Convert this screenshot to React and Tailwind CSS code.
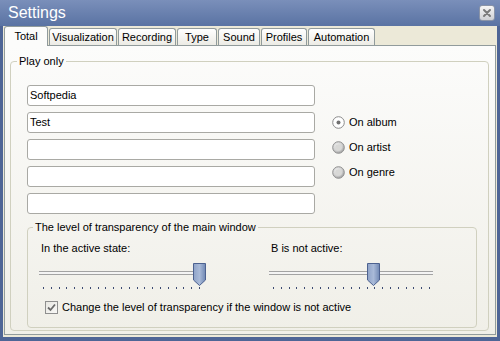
import React from "react";

function CloseButton() {
  return (
    <div className="w-[16px] h-[16px] rounded-[3px] border border-[#8a94a8] bg-gradient-to-b from-[#f6f6f6] to-[#cfd0d4] flex items-center justify-center">
      <svg width="10" height="10" viewBox="0 0 10 10">
        <path d="M2 2 L8 8 M8 2 L2 8" stroke="#7a7a7a" strokeWidth="2" strokeLinecap="round" />
      </svg>
    </div>
  );
}

function Radio({ checked, label }) {
  return (
    <div className="h-[16px] flex items-center gap-[4px]">
      <svg width="13" height="13" viewBox="0 0 13 13">
        <defs>
          <radialGradient id="rg" cx="0.4" cy="0.35" r="0.7">
            <stop offset="0" stopColor="#f2f2f2" />
            <stop offset="0.6" stopColor="#cfcfcf" />
            <stop offset="1" stopColor="#9a9a9a" />
          </radialGradient>
        </defs>
        {checked ? (
          <>
            <circle cx="6.5" cy="6.5" r="5.8" fill="#ffffff" stroke="#8a8a8a" strokeWidth="1" />
            <circle cx="6.5" cy="6.5" r="2" fill="#707070" />
          </>
        ) : (
          <>
            <circle cx="6.5" cy="6.5" r="5.8" fill="url(#rg)" stroke="#8f8f8f" strokeWidth="1" />
            <circle cx="6.5" cy="6.5" r="3.3" fill="#d8d8d6" />
          </>
        )}
      </svg>
      <span className="text-[11px] leading-[13px] text-black">{label}</span>
    </div>
  );
}

function Slider({ offset, dotsPadL, dotsPadR }) {
  const dots = Array.from({ length: 21 });
  return (
    <div className="w-[166px]">
      <div className="relative h-[22px]">
        <div className="absolute left-0 right-[2px] top-[8px] h-[4px] border-y border-[#a3a3a3] bg-[#f4f4f4]" />
        <div className="absolute top-0" style={{ left: offset }}>
          <svg width="13" height="23" viewBox="0 0 13 23">
            <defs>
              <linearGradient id="tg" x1="0" x2="1" y1="0" y2="0">
                <stop offset="0" stopColor="#8fa3c8" />
                <stop offset="0.5" stopColor="#a9bad8" />
                <stop offset="1" stopColor="#7088b4" />
              </linearGradient>
            </defs>
            <path d="M0.5 0.5 H12.5 V17 L6.5 22.5 L0.5 17 Z" fill="url(#tg)" stroke="#4d6290" strokeWidth="1" />
          </svg>
        </div>
      </div>
      <div className="mt-[2px] flex justify-between" style={{ paddingLeft: dotsPadL, paddingRight: dotsPadR }}>
        {dots.map((_, i) => (
          <span key={i} className="w-[1px] h-[2px] bg-[#3d4b72]" />
        ))}
      </div>
    </div>
  );
}

export default function App() {
  const tabs = [
    ["Visualization", 68],
    ["Recording", 58],
    ["Type", 40],
    ["Sound", 42],
    ["Profiles", 46],
    ["Automation", 67],
  ];
  return (
    <div
      className="w-[500px] h-[341px] flex flex-col bg-[#4e6596] overflow-hidden text-black"
      style={{ fontFamily: '"Liberation Sans", Arial, sans-serif' }}
    >
      <div className="h-[26px] shrink-0 flex items-center justify-between pl-[8px] pr-[5px] bg-gradient-to-b from-[#7a8fba] to-[#5a73a3]">
        <span className="text-white text-[16px] leading-[18px]">Settings</span>
        <CloseButton />
      </div>
      <div className="flex-1 mx-[3px] mb-[4px] bg-[#ece9d8] flex flex-col px-[1px] pb-[2px]">
        <div className="h-[19px] shrink-0 flex items-end">
          <div className="relative z-10 -mb-px w-[44px] h-[20px] border-x border-t border-[#919b9c] rounded-t-[3px] bg-[#fcfcfb] flex items-center justify-center text-[11px] leading-[13px]">
            <span className="-mt-[1px]">Total</span>
          </div>
          <div className="flex items-end gap-[1px] ml-[1px]">
            {tabs.map(([t, w]) => (
              <div
                key={t}
                style={{ width: w }}
                className="h-[17px] border-x border-t border-[#919b9c] rounded-t-[3px] bg-gradient-to-b from-[#ffffff] to-[#ecebe5] flex items-center justify-center text-[11px] leading-[13px]"
              >
                {t}
              </div>
            ))}
          </div>
        </div>
        <div className="flex-1 border border-[#919b9c] bg-gradient-to-b from-[#fcfcfb] to-[#f0efe8] pl-[5px] pr-[5px] pt-[9px]">
          <fieldset className="border border-[#d0d0bf] rounded-[4px] px-[6px] pb-[1px] w-[479px]">
            <legend className="px-[2px] text-[11px] leading-[13px]">Play only</legend>
            <div className="pl-[10px] pt-[17px]">
              <div className="flex">
                <div className="w-[288px] flex flex-col gap-[6px]">
                  <div className="h-[21px] rounded-[3px] border border-[#a9a9a4] bg-white flex items-center pl-[2px] text-[11px]">Softpedia</div>
                  <div className="h-[21px] rounded-[3px] border border-[#a9a9a4] bg-white flex items-center pl-[2px] text-[11px]">Test</div>
                  <div className="h-[21px] rounded-[3px] border border-[#a9a9a4] bg-white" />
                  <div className="h-[21px] rounded-[3px] border border-[#a9a9a4] bg-white" />
                  <div className="h-[21px] rounded-[3px] border border-[#a9a9a4] bg-white" />
                </div>
                <div className="ml-[17px] pt-[29px] flex flex-col gap-[9px]">
                  <Radio checked label="On album" />
                  <Radio label="On artist" />
                  <Radio label="On genre" />
                </div>
              </div>
              <fieldset className="mt-[7px] mb-[1px] w-[450px] border border-[#d0d0bf] rounded-[4px] pl-[5px] pr-[5px] pb-[13px]">
                <legend className="px-[2px] text-[11px] leading-[13px]">The level of transparency of the main window</legend>
                <div className="pt-[8px] pl-[6px] flex gap-[64px]">
                  <div className="flex flex-col">
                    <span className="ml-[2px] text-[11px] leading-[13px]">In the active state:</span>
                    <div className="mt-[8px]">
                      <Slider offset={154} dotsPadL={4} dotsPadR={5} />
                    </div>
                  </div>
                  <div className="flex flex-col">
                    <span className="ml-[2px] text-[11px] leading-[13px]">B is not active:</span>
                    <div className="mt-[8px]">
                      <Slider offset={98} dotsPadL={4} dotsPadR={5} />
                    </div>
                  </div>
                </div>
                <div className="mt-[12px] pl-[12px] flex items-center gap-[4px]">
                  <div className="w-[13px] h-[13px] border border-[#8f8f8f] bg-gradient-to-br from-[#e8e7e2] to-[#f8f8f6] flex items-center justify-center">
                    <svg width="9" height="9" viewBox="0 0 9 9">
                      <path d="M1 4.5 L3.5 7 L8 1.5" fill="none" stroke="#6a6a6a" strokeWidth="1.8" />
                    </svg>
                  </div>
                  <span className="text-[11px] leading-[13px]">Change the level of transparency if the window is not active</span>
                </div>
              </fieldset>
            </div>
          </fieldset>
        </div>
      </div>
    </div>
  );
}
